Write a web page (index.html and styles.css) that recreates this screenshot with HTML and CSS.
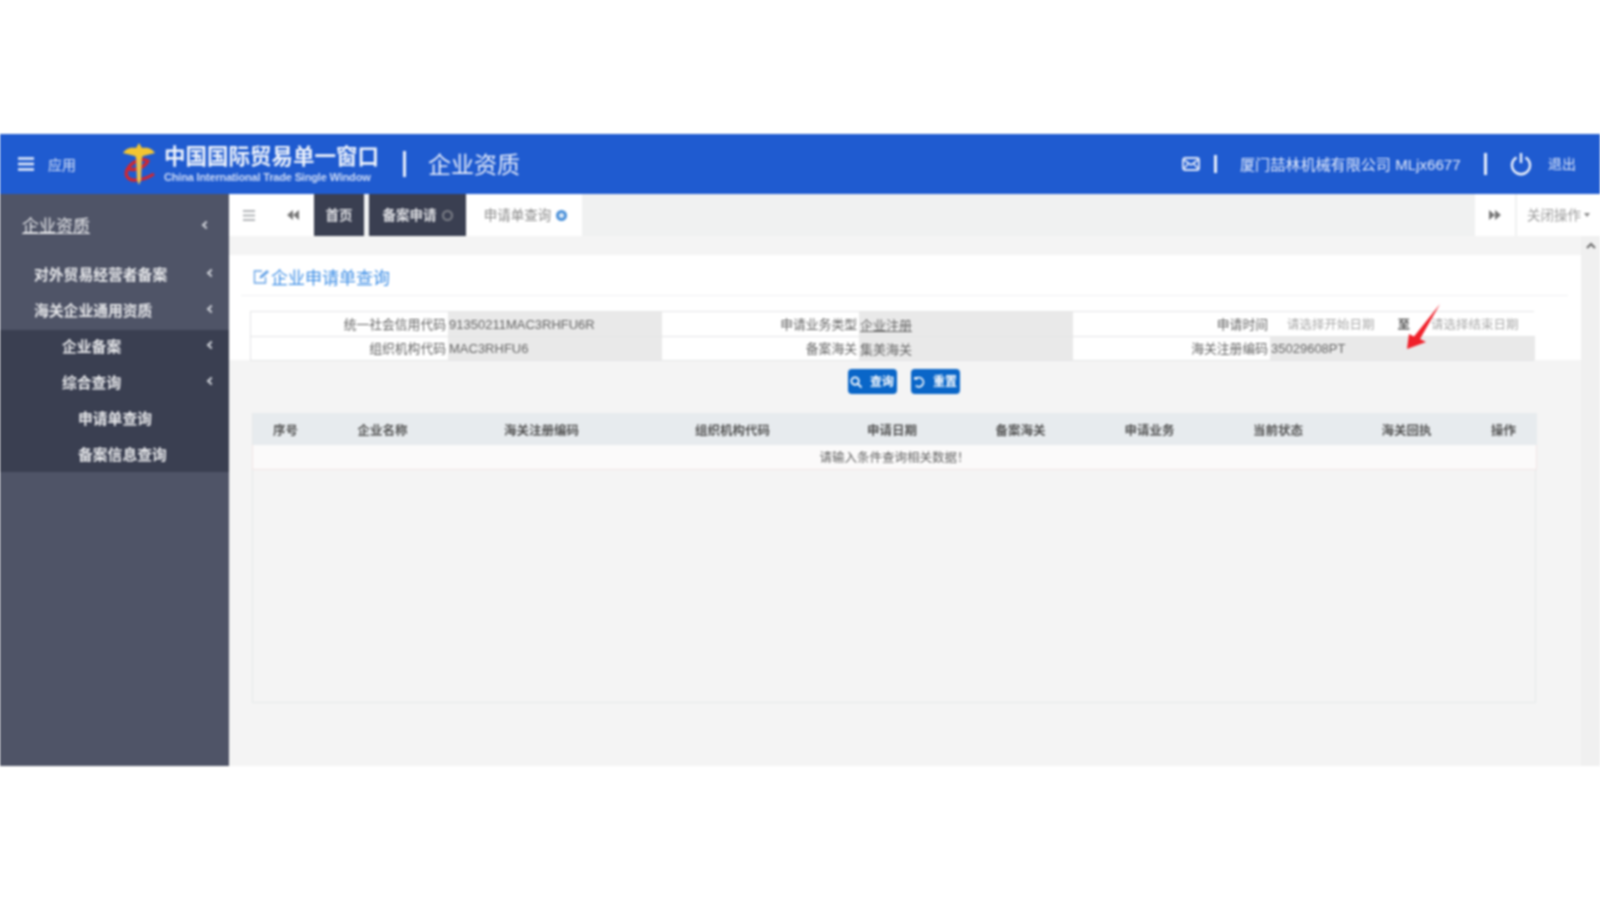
FILE: index.html
```html
<!DOCTYPE html>
<html lang="zh-CN">
<head>
<meta charset="utf-8">
<title>企业资质</title>
<link rel="stylesheet" href="styles.css">
</head>
<body>
<div class="app">
  <header class="topbar">
    <div class="apps">
      <svg class="burger" width="16" height="14" viewBox="0 0 16 14"><path d="M0 1.500h16M0 7h16M0 12.500h16" stroke="#e8eefb" stroke-width="2.600"/></svg>
      <span class="apps-label">应用</span>
    </div>
    <svg class="logo" width="34" height="44" viewBox="0 0 34 44">
      <path d="M7 27C14 29 23 25 26 19 20 15 9 20 5 28 2 35 8 39 14 38 20 38 27 35 32 32" fill="none" stroke="#d3262e" stroke-width="3.200"/>
      <path d="M14 14h6l-1 24-2 5-2-5z" fill="#e6c04e"/>
      <path d="M17 1l3 5c5-1 10 0 13 5-4 1-8 2-12 3l-2 3h-4l-2-3c-4-1-8-2-12-3 3-5 8-6 13-5z" fill="#f3c531"/>
    </svg>
    <div class="brand">
      <div class="brand-cn">中国国际贸易单一窗口</div>
      <div class="brand-en">China International Trade Single Window</div>
    </div>
    <i class="bar bar-title"></i>
    <div class="page-title">企业资质</div>
    <div class="user">
      <svg width="18" height="14" viewBox="0 0 18 14" fill="none" stroke="#dfe7f8" stroke-width="1.800"><rect x="1" y="1" width="16" height="12" rx="2"/><path d="M1.500 2.500 9 8l7.500-5.500M1.500 12 6.500 6.500M16.500 12l-5-5.500"/></svg>
      <i class="bar bar-mail"></i>
      <span class="user-name">厦门喆林机械有限公司 MLjx6677</span>
      <i class="bar bar-user"></i>
      <svg class="power" width="22" height="24" viewBox="0 0 22 24" fill="none" stroke="#eef3fc" stroke-width="2.400"><path d="M6.500 5.500a9 9 0 1 0 9 0"/><path d="M11 1v10"/></svg>
      <span class="logout">退出</span>
    </div>
  </header>
  <div class="body">
    <aside class="sidebar">
      <div class="side-head"><span>企业资质</span><b class="chev"></b></div>
      <div class="side-item"><span>对外贸易经营者备案</span><b class="chev"></b></div>
      <div class="side-item"><span>海关企业通用资质</span><b class="chev"></b></div>
      <div class="side-dark">
        <div class="side-item lv2"><span>企业备案</span><b class="chev"></b></div>
        <div class="side-item lv2"><span>综合查询</span><b class="chev"></b></div>
        <div class="side-item lv3"><span>申请单查询</span></div>
        <div class="side-item lv3"><span>备案信息查询</span></div>
      </div>
    </aside>
    <main class="main">
      <nav class="tabs">
        <div class="tab-left">
          <svg width="12" height="11" viewBox="0 0 12 11"><path d="M0 1h12M0 5.500h12M0 10h12" stroke="#9a9ea3" stroke-width="1.600"/></svg>
          <svg class="dbl" width="12" height="10" viewBox="0 0 12 10"><path d="M6 0v10L0 5zM12 0v10L6 5z" fill="#777"/></svg>
        </div>
        <div class="tab tab-dark tab-home"><span>首页</span></div>
        <div class="tab tab-dark tab-filing"><span>备案申请</span><i class="dot dot-grey"></i></div>
        <div class="tab tab-active"><span>申请单查询</span><i class="dot dot-blue"></i></div>
        <div class="tab-fill"></div>
        <div class="tab-next"><svg width="12" height="10" viewBox="0 0 12 10"><path d="M0 0v10l6-5zM6 0v10l6-5z" fill="#777"/></svg></div>
        <div class="tab-close"><span>关闭操作</span><i class="caret"></i></div>
      </nav>
      <div class="content">
        <div class="scroll-area">
          <section class="panel">
            <h2 class="panel-title">
              <svg width="17" height="15" viewBox="0 0 17 15" fill="none" stroke="#66a3e6" stroke-width="1.400"><path d="M9 2H1.500v12h11V8"/><path d="M6.500 9.500 7 7l7-6 2 2-7 6z" fill="#66a3e6" stroke="none"/></svg>
              <span>企业申请单查询</span>
            </h2>
            <div class="form">
              <div class="cell label">统一社会信用代码</div>
              <div class="cell value">91350211MAC3RHFU6R</div>
              <div class="cell label">申请业务类型</div>
              <div class="cell value"><u>企业注册</u></div>
              <div class="cell label">申请时间</div>
              <div class="cell dates"><span>请选择开始日期</span><em>至</em><span>请选择结束日期</span></div>
              <div class="cell label">组织机构代码</div>
              <div class="cell value">MAC3RHFU6</div>
              <div class="cell label">备案海关</div>
              <div class="cell value">集美海关</div>
              <div class="cell label">海关注册编码</div>
              <div class="cell value">35029608PT</div>
              <svg class="arrow" width="40" height="50" viewBox="0 0 40 50"><path d="M39 3 19 38l6 3-19 7 2-15 5 2.500z" fill="#f0202a"/></svg>
            </div>
          </section>
          <div class="actions">
            <button class="btn"><svg width="12" height="12" viewBox="0 0 13 13" fill="none" stroke="#fff" stroke-width="2"><circle cx="5.500" cy="5.500" r="4"/><path d="m8.500 8.500 4 4"/></svg><span>查询</span></button>
            <button class="btn"><svg width="12" height="12" viewBox="0 0 13 13" fill="none" stroke="#fff" stroke-width="1.800"><path d="M3 3a5 5 0 1 1 0 7.500"/><path d="M1 2.500h4M3 1v3"/></svg><span>重置</span></button>
          </div>
          <div class="grid-wrap">
            <table class="grid">
              <colgroup><col class="c1"><col class="c2"><col class="c3"><col class="c4"><col class="c5"><col class="c6"><col class="c7"><col class="c8"><col class="c9"><col class="c10"></colgroup>
              <thead><tr><th>序号</th><th>企业名称</th><th>海关注册编码</th><th>组织机构代码</th><th>申请日期</th><th>备案海关</th><th>申请业务</th><th>当前状态</th><th>海关回执</th><th>操作</th></tr></thead>
              <tbody><tr><td colspan="10">请输入条件查询相关数据！</td></tr></tbody>
            </table>
          </div>
        </div>
        <div class="scrollbar"><svg width="10" height="7" viewBox="0 0 10 7" fill="none" stroke="#6d6d6d" stroke-width="2"><path d="m1 6 4-4 4 4"/></svg></div>
      </div>
    </main>
  </div>
</div>
</body>
</html>
```
FILE: styles.css
```css
* { box-sizing: border-box; }
html, body { margin: 0; background: #fff; }
body {
  height: 900px;
  overflow: hidden;
  padding-top: 134px;
  font-family: "Liberation Sans", "Noto Sans CJK SC", sans-serif;
  color: #555;
}
.app {
  height: 632px;
  display: flex;
  flex-direction: column;
  filter: blur(0.9px);
}
.topbar {
  height: 60px;
  flex: none;
  display: flex;
  align-items: center;
  background: #1f5bd0;
  color: #eef3fc;
  padding-left: 18px;
}
.apps { display: flex; align-items: center; width: 104px; }
.apps-label { margin-left: 14px; font-size: 14px; color: #dbe5f8; }
.logo { margin-right: 8px; }
.brand { width: 219px; }
.brand-cn { font-size: 21.500px; line-height: 26px; font-weight: 700; white-space: nowrap; }
.brand-en { font-size: 11px; line-height: 14px; color: #cfdcf6; font-weight: 700; white-space: nowrap; letter-spacing: -.17px; }
.bar { display: block; width: 3px; background: #e6edfb; }
.bar-title { height: 26px; margin-left: 20px; }
.page-title { margin-left: 22px; font-size: 23px; color: #e8eefb; margin-top: -2px; }
.user { margin-left: auto; display: flex; align-items: center; padding-right: 24px; }
.bar-mail { height: 18px; margin-left: 14px; }
.user-name { margin-left: 23px; font-size: 15.100px; color: #e4ebfa; width: 222px; white-space: nowrap; margin-top: -3px; }
.bar-user { height: 22px; margin-left: 22px; }
.power { margin-left: 23px; }
.logout { margin-left: 16px; font-size: 14px; color: #dfe7f8; margin-top: -2px; }

.body { flex: 1; display: flex; min-height: 0; }
.sidebar { width: 229px; flex: none; background: #4f5467; color: #e6e7ea; }
.side-head {
  height: 64px;
  padding: 0 20px 3px 22px;
  display: flex;
  align-items: center;
  justify-content: space-between;
  font-size: 17px;
  text-decoration: underline;
  text-decoration-thickness: 0;
}
.side-item {
  height: 36px;
  padding: 0 15px 6px 34px;
  display: flex;
  align-items: center;
  justify-content: space-between;
  font-size: 14.800px;
  font-weight: 700;
  white-space: nowrap;
}
.side-dark { background: #3a3f51; }
.side-dark .side-item:last-child { height: 34px; padding-bottom: 4px; }
.lv2 { padding-left: 62px; }
.lv3 { padding-left: 78px; }
.chev {
  width: 6px;
  height: 6px;
  border-left: 2px solid #c9ccd3;
  border-bottom: 2px solid #c9ccd3;
  transform: rotate(45deg);
}

.main { flex: 1; min-width: 0; display: flex; flex-direction: column; background: #f4f4f4; }
.tabs { height: 42px; flex: none; display: flex; background: #f0f1f1; font-size: 13.500px; }
.tab-left { width: 85px; background: #fff; display: flex; align-items: center; padding-left: 14px; }
.dbl { margin-left: 32px; }
.tab { display: flex; align-items: center; justify-content: center; }
.tab span, .tab-close span { margin-top: -3px; }
.tab-dark { background: #3a3f51; color: #dfe0e4; font-weight: 700; }
.tab-home { width: 50px; margin-right: 5px; }
.tab-filing { width: 97px; }
.tab-active { width: 116px; padding-left: 3px; background: #fff; color: #8b8b8b; }
.dot { width: 11px; height: 11px; border-radius: 50%; margin-left: 5px; }
.dot-grey { border: 2px solid #7d8088; }
.dot-blue { border: 3px solid #4a90d9; background: #dce9f7; }
.tab-fill { flex: 1; }
.tab-next { width: 40px; background: #fff; display: flex; align-items: center; justify-content: center; }
.tab-close {
  width: 83px;
  margin-left: 2px;
  background: #fff;
  color: #9d9d9d;
  display: flex;
  align-items: center;
  justify-content: center;
  white-space: nowrap;
}
.caret { margin-left: 3px; border: 3px solid transparent; border-top: 4px solid #888; border-bottom: 0; }

.content { flex: 1; display: flex; min-height: 0; }
.scroll-area { flex: 1; min-width: 0; padding-top: 19px; }
.scrollbar { width: 19px; flex: none; background: #f0f0f0; display: flex; justify-content: center; padding-top: 6px; }
.scrollbar svg { display: block; }
.panel { height: 105px; background: #fff; padding-left: 12px; padding-right: 13px; }
.panel-title {
  height: 41px;
  margin: 0;
  padding: 11px 0 0 12px;
  display: flex;
  align-items: flex-start;
  gap: 1px;
  border-bottom: 1px solid #f0f1f2;
  font-size: 17px;
  line-height: 26px;
  font-weight: 400;
  color: #3f8fe6;
}
.panel-title svg { margin-top: 3px; }
.form {
  position: relative;
  margin: 15px 0 0 9px;
  width: 1284px;
  display: grid;
  grid-template-columns: 197px 214px 197px 214px 197px 265px;
  grid-template-rows: 25px 23px;
  border: 1px solid #e4e5e6;
  font-size: 13px;
  color: #666;
}
.cell { display: flex; align-items: center; white-space: nowrap; border-bottom: 1px solid #e4e5e6; }
.cell:nth-last-child(-n+7) { border-bottom: 0; }
.label { justify-content: flex-end; padding: 0 2px 2px 0; background: #fff; font-size: 12.800px; }
.value { padding-left: 1px; background: #e9e9e9; color: #666; }
.dates { background: #fff; color: #aaa; font-size: 12.500px; padding: 0 0 2px 17px; }
.dates em { font-style: normal; color: #555; font-weight: 700; margin: 0 21px 0 23px; }
.arrow { position: absolute; left: 1150px; top: -11px; }
.actions { display: flex; justify-content: center; gap: 14px; margin-top: 9px; padding-right: 3px; }
.btn {
  width: 49px;
  height: 25px;
  padding: 0;
  border: 0;
  border-radius: 4px;
  background: #0a66c8;
  color: #fff;
  font: 700 12px "Liberation Sans", "Noto Sans CJK SC", sans-serif;
  display: flex;
  align-items: center;
  justify-content: center;
  gap: 8px;
}
.btn span { margin-top: -2px; }
.grid-wrap {
  width: 1284px;
  height: 290px;
  margin: 19px 0 0 23px;
  border: 1px solid #e6e9e9;
  border-top: 0;
}
.grid { width: 1284px; margin-left: -1px; border-collapse: collapse; table-layout: fixed; font-size: 12.500px; }
.c1 { width: 66px; } .c2 { width: 128px; } .c3 { width: 190px; } .c4 { width: 192px; } .c5 { width: 127px; }
.c6 { width: 130px; } .c7 { width: 128px; } .c8 { width: 129px; } .c9 { width: 128px; } .c10 { width: 66px; }
.grid th { height: 32px; padding: 0; background: #e7ebee; color: #555; font-weight: 700; }
.grid td { height: 24px; padding: 0; text-align: center; background: #fbfafa; color: #666; border: 1px solid #f0e6e6; border-top: 0; }
```
